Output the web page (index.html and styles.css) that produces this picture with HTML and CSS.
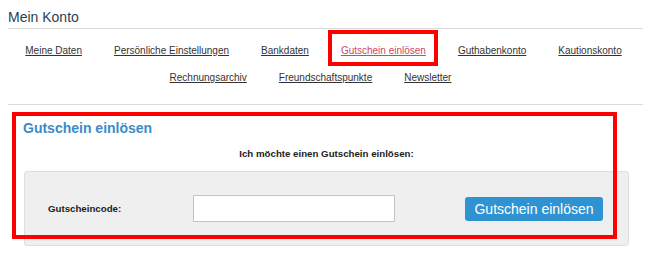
FILE: index.html
```html
<!DOCTYPE html>
<html lang="de">
<head>
    <meta charset="UTF-8">
    <meta name="viewport" content="width=device-width, initial-scale=1.0">
    <title>Mein Konto</title>
    <link rel="stylesheet" href="styles.css">
</head>
<body>

    <div class="page">
        <h1 class="page-title">Mein Konto</h1>

        <nav class="account-nav">
            <div class="nav-row">
                <a href="#">Meine Daten</a>
                <a href="#">Persönliche Einstellungen</a>
                <a href="#">Bankdaten</a>
                <a href="#" class="active">Gutschein einlösen</a>
                <a href="#">Guthabenkonto</a>
                <a href="#">Kautionskonto</a>
            </div>
            <div class="nav-row second">
                <a href="#">Rechnungsarchiv</a>
                <a href="#">Freundschaftspunkte</a>
                <a href="#">Newsletter</a>
            </div>
        </nav>

        <div class="voucher">
            <h2>Gutschein einlösen</h2>
            <p class="intro">Ich möchte einen Gutschein einlösen:</p>

            <form class="voucher-form">
                <label for="code">Gutscheincode:</label>
                <input type="text" id="code" name="code">
                <button type="button">Gutschein einlösen</button>
            </form>
        </div>
    </div>

    <!-- annotation boxes -->
    <div class="mark mark-tab"></div>
    <div class="mark mark-box"></div>

</body>
</html>
```

FILE: styles.css
```css
/* Basic Reset */
* {
    margin: 0;
    padding: 0;
    box-sizing: border-box;
}

body {
    font-family: 'Liberation Sans', Arial, sans-serif;
    background: #fff;
    color: #333;
    position: relative;
    width: 650px;
    height: 255px;
    overflow: hidden;
}

.page {
    padding: 9px 7px 0 8px;
}

.page-title {
    font-size: 14px;
    font-weight: normal;
    color: #2c3e50;
    line-height: 16px;
    padding-bottom: 3px;
    border-bottom: 1px solid #dcdcdc;
}

.account-nav {
    padding: 8px 0 13px;
    border-bottom: 1px solid #dcdcdc;
}

.nav-row {
    display: flex;
    justify-content: center;
    gap: 32px;
    line-height: 27px;
    padding-right: 4px;
}

.nav-row.second {
    padding-right: 30px;
}

.nav-row a {
    font-size: 10px;
    color: #333;
    text-decoration: underline;
}

.nav-row a.active {
    color: #c9486b;
}

.voucher {
    padding: 15px 14px 0 16px;
}

.voucher h2 {
    font-size: 14px;
    font-weight: bold;
    color: #3a8cc5;
    line-height: 16px;
    margin-left: -1px;
}

.intro {
    font-size: 9.7px;
    font-weight: bold;
    color: #222;
    text-align: center;
    line-height: 12px;
    margin-top: 12px;
}

.voucher-form {
    margin-top: 11px;
    height: 75px;
    display: flex;
    align-items: center;
    background: #efefef;
    border: 1px solid #dedede;
    border-radius: 3px;
    padding-left: 23px;
}

.voucher-form label {
    font-size: 9.7px;
    font-weight: bold;
    color: #222;
    width: 145px;
}

.voucher-form input {
    width: 202px;
    height: 27px;
    border: 1px solid #c4c4c4;
    background: #fff;
    margin-right: 70px;
}

.voucher-form button {
    width: 138px;
    height: 24px;
    background: #2f93d1;
    color: #fff;
    border: none;
    border-radius: 3px;
    font-family: 'Liberation Sans', Arial, sans-serif;
    font-size: 14px;
}

/* red annotation frames */
.mark {
    position: absolute;
    border: 4px solid #f00;
}

.mark-tab {
    left: 328px;
    top: 30px;
    width: 110px;
    height: 36px;
}

.mark-box {
    left: 12px;
    top: 112px;
    width: 605px;
    height: 127px;
}
```
